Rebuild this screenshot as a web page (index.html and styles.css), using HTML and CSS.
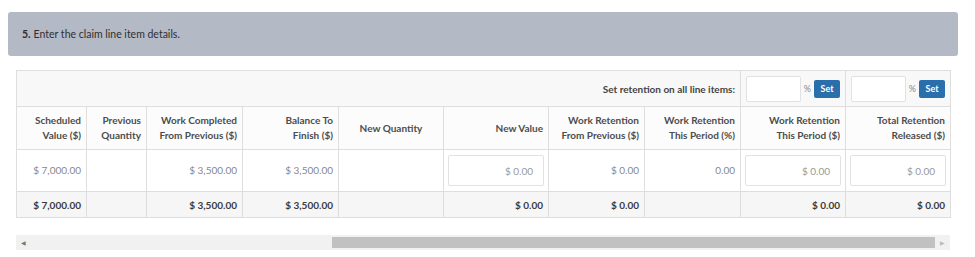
FILE: index.html
```html
<!DOCTYPE html>
<html lang="en">
<head>
  <meta charset="UTF-8">
  <title>Claim Line Items</title>
  <link rel="stylesheet" href="styles.css">
</head>
<body>
  <div class="step-bar"><strong>5.</strong> Enter the claim line item details.</div>

  <div class="table-wrap">
    <table class="claim-table">
      <colgroup>
        <col style="width:70px"><col style="width:60px"><col style="width:96px"><col style="width:96px"><col style="width:105px">
        <col style="width:105px"><col style="width:96px"><col style="width:96px"><col style="width:105px"><col style="width:105px">
      </colgroup>
      <tr class="bulk-row">
        <td colspan="8" class="bulk-label">Set retention on all line items:</td>
        <td><div class="bulk-set"><input type="text" class="box"><span class="pct">%</span><button class="btn-set">Set</button></div></td>
        <td><div class="bulk-set"><input type="text" class="box"><span class="pct">%</span><button class="btn-set">Set</button></div></td>
      </tr>
      <tr class="head-row">
        <th>Scheduled<br>Value ($)</th>
        <th>Previous<br>Quantity</th>
        <th>Work Completed<br>From Previous ($)</th>
        <th>Balance To<br>Finish ($)</th>
        <th class="center">New Quantity</th>
        <th>New Value</th>
        <th>Work Retention<br>From Previous ($)</th>
        <th>Work Retention<br>This Period (%)</th>
        <th>Work Retention<br>This Period ($)</th>
        <th>Total Retention<br>Released ($)</th>
      </tr>
      <tr class="data-row">
        <td>$ 7,000.00</td>
        <td></td>
        <td>$ 3,500.00</td>
        <td>$ 3,500.00</td>
        <td></td>
        <td><div class="cell-input">$ 0.00</div></td>
        <td>$ 0.00</td>
        <td>0.00</td>
        <td><div class="cell-input">$ 0.00</div></td>
        <td><div class="cell-input">$ 0.00</div></td>
      </tr>
      <tr class="total-row">
        <td>$ 7,000.00</td>
        <td></td>
        <td>$ 3,500.00</td>
        <td>$ 3,500.00</td>
        <td></td>
        <td>$ 0.00</td>
        <td>$ 0.00</td>
        <td></td>
        <td>$ 0.00</td>
        <td>$ 0.00</td>
      </tr>
    </table>
  </div>

  <div class="hscroll">
    <span class="arrow">&#9664;</span>
    <div class="track"><div class="thumb"></div></div>
    <span class="arrow">&#9654;</span>
  </div>
</body>
</html>
```

FILE: styles.css
```css
body {
  margin: 0;
  padding: 12px 0 0 8px;
  font-family: Lato, "Open Sans", sans-serif;
  color: #444;
  background: #fff;
}
.step-bar {
  width: 950px;
  height: 44px;
  box-sizing: border-box;
  padding: 0 14px;
  display: flex;
  align-items: center;
  background-color: #b4b9c6;
  border-radius: 3px;
  font-size: 10.5px;
  color: #2f2f2f;
}
.step-bar strong {
  margin-right: 3px;
}
.table-wrap {
  margin: 14px 0 0 8px;
  width: 934px;
}
.claim-table {
  width: 934px;
  table-layout: fixed;
  border-collapse: collapse;
  font-size: 10px;
}
.claim-table td, .claim-table th {
  border: 1px solid #dedede;
  padding: 0 5px;
  text-align: right;
  vertical-align: middle;
}
.bulk-row {
  height: 36px;
  background: #f8f8f8;
}
.bulk-row .bulk-label {
  font-weight: bold;
  color: #444;
  padding-right: 5px;
}
.bulk-set {
  display: flex;
  align-items: center;
  justify-content: flex-end;
}
.box {
  width: 55px;
  height: 26px;
  box-sizing: border-box;
  border: 1px solid #e2e2e2;
  border-radius: 2px;
  background: #fff;
  margin: 0 auto 0 0;
}
.pct {
  color: #888;
  font-size: 9px;
  margin-right: 3px;
}
.btn-set {
  background-color: #2a6eab;
  color: #fff;
  border: none;
  border-radius: 2px;
  height: 18px;
  width: 26px;
  padding: 0;
  font-family: inherit;
  font-size: 9px;
  font-weight: bold;
}
.head-row {
  height: 43px;
  background: #fcfcfc;
}
.head-row th {
  font-weight: bold;
  color: #4d4d4d;
  line-height: 15px;
}
.head-row th.center {
  text-align: center;
}
.data-row {
  height: 42px;
  color: #888;
}
.data-row td {
  vertical-align: top;
  padding-top: 14px;
}
.data-row td:nth-child(6), .data-row td:nth-child(9), .data-row td:nth-child(10) {
  padding: 0 4px;
  vertical-align: middle;
}
.cell-input {
  height: 31px;
  box-sizing: border-box;
  border: 1px solid #e2e2e2;
  border-radius: 2px;
  display: flex;
  align-items: center;
  justify-content: flex-end;
  padding-right: 10px;
  color: #999;
}
.total-row {
  height: 26px;
  background: #f6f6f6;
  font-weight: bold;
  color: #3a3a3a;
}
.hscroll {
  margin: 17px 0 0 8px;
  width: 934px;
  height: 15px;
  display: flex;
  align-items: center;
  background: #f1f1f1;
}
.arrow {
  font-size: 6px;
  color: #777;
  width: 15px;
  text-align: center;
}
.arrow:last-child {
  color: #bbb;
}
.track {
  flex: 1;
  height: 15px;
  display: flex;
}
.thumb {
  margin-left: 301px;
  flex: 1;
  height: 11px;
  margin-top: 2px;
  background: #c1c1c1;
}
```
